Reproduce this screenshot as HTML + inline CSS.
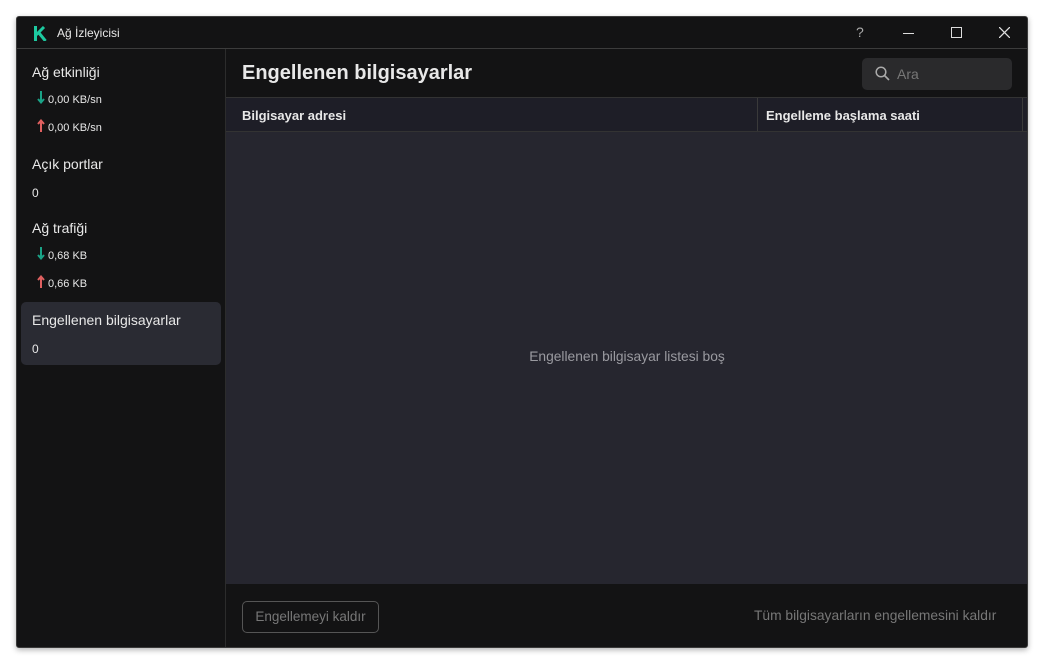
<!DOCTYPE html>
<html><head><style>
*{margin:0;padding:0;box-sizing:border-box}
body{width:1044px;height:664px;background:#fff;font-family:"Liberation Sans",sans-serif;position:relative;overflow:hidden}
.win{position:absolute;left:16px;top:16px;width:1012px;height:632px;background:#131314;border:1px solid #3a3a3a;border-radius:3px;overflow:hidden;box-shadow:0 2px 6px rgba(0,0,0,.3)}
.tb{position:absolute;left:0;top:0;width:100%;height:32px;border-bottom:1px solid #3c3c3c}
.t{position:absolute;color:#e8e8e8;white-space:nowrap}
.side{position:absolute;left:0;top:32px;width:209px;bottom:0;border-right:1px solid #2c2c2c}
.sel{position:absolute;left:4px;top:253px;width:200px;height:63px;background:#2a2b33;border-radius:5px}
.main{position:absolute;left:209px;top:32px;right:0;bottom:0}
.ar{position:absolute;left:20px}
</style></head><body>
<div class="win">
 <div class="tb">
  <svg style="position:absolute;left:17px;top:9px" width="13" height="15" viewBox="0 0 13 15"><path d="M1.5 0V15M2 9L10 1M5 7L11.5 15" stroke="#1dc9a0" stroke-width="3" fill="none"/></svg>
  <div class="t" style="left:40px;top:9px;font-size:12px">Ağ İzleyicisi</div>
  <div class="t" style="left:839px;top:7px;font-size:14px;color:#aaa">?</div>
  <div style="position:absolute;left:886px;top:16px;width:11px;height:1px;background:#ddd"></div>
  <div style="position:absolute;left:934px;top:10px;width:11px;height:11px;border:1.3px solid #ddd"></div>
  <svg style="position:absolute;left:982px;top:10px" width="11" height="11"><path d="M0 0L11 11M11 0L0 11" stroke="#ddd" stroke-width="1.3"/></svg>
 </div>
 <div class="side">
  <div class="sel"></div>
  <div class="t" style="left:15px;top:15px;font-size:14px">Ağ etkinliği</div>
  <svg class="ar" style="top:42px" width="8" height="13"><path d="M4 0V11M1 8L4 11.5L7 8" stroke="#1aa387" stroke-width="2" fill="none"/></svg>
  <div class="t" style="left:31px;top:45px;font-size:11px">0,00 KB/sn</div>
  <svg class="ar" style="top:70px" width="8" height="13"><path d="M4 13V2M1 5L4 1.5L7 5" stroke="#e06060" stroke-width="2" fill="none"/></svg>
  <div class="t" style="left:31px;top:73px;font-size:11px">0,00 KB/sn</div>
  <div class="t" style="left:15px;top:107px;font-size:14px">Açık portlar</div>
  <div class="t" style="left:15px;top:137px;font-size:12px">0</div>
  <div class="t" style="left:15px;top:171px;font-size:14px">Ağ trafiği</div>
  <svg class="ar" style="top:198px" width="8" height="13"><path d="M4 0V11M1 8L4 11.5L7 8" stroke="#1aa387" stroke-width="2" fill="none"/></svg>
  <div class="t" style="left:31px;top:201px;font-size:11px">0,68 KB</div>
  <svg class="ar" style="top:226px" width="8" height="13"><path d="M4 13V2M1 5L4 1.5L7 5" stroke="#e06060" stroke-width="2" fill="none"/></svg>
  <div class="t" style="left:31px;top:229px;font-size:11px">0,66 KB</div>
  <div class="t" style="left:15px;top:263px;font-size:14px">Engellenen bilgisayarlar</div>
  <div class="t" style="left:15px;top:293px;font-size:12px">0</div>
 </div>
 <div class="main">
  <div class="t" style="left:16px;top:13px;font-size:20px;font-weight:bold">Engellenen bilgisayarlar</div>
  <div style="position:absolute;left:636px;top:9px;width:150px;height:32px;background:#2a2a2c;border-radius:5px">
   <svg style="position:absolute;left:13px;top:8px" width="15" height="15"><circle cx="6" cy="6" r="4.8" stroke="#aaa" stroke-width="1.5" fill="none"/><path d="M9.5 9.5L14 14" stroke="#aaa" stroke-width="1.6"/></svg>
   <div class="t" style="left:35px;top:8px;font-size:14px;color:#777">Ara</div>
  </div>
  <div style="position:absolute;left:0;top:48px;right:0;height:35px;background:#1e1e27;border-top:1px solid #333;border-bottom:1px solid #333">
   <div class="t" style="left:16px;top:10px;font-size:13px;font-weight:bold">Bilgisayar adresi</div>
   <div style="position:absolute;left:531px;top:0;width:1px;height:33px;background:#3a3a3a"></div>
   <div class="t" style="left:540px;top:10px;font-size:13px;font-weight:bold">Engelleme başlama saati</div>
   <div style="position:absolute;left:796px;top:0;width:1px;height:33px;background:#3a3a3a"></div>
  </div>
  <div style="position:absolute;left:0;top:83px;right:0;height:452px;background:#26262f">
   <div class="t" style="left:0;width:802px;text-align:center;top:217px;font-size:13.8px;color:#9a9aa0">Engellenen bilgisayar listesi boş</div>
  </div>
  <div style="position:absolute;left:16px;top:552px;width:137px;height:32px;border:1px solid #555;border-radius:5px">
   <div class="t" style="left:0;width:135px;text-align:center;top:7px;font-size:13.5px;color:#777">Engellemeyi kaldır</div>
  </div>
  <div class="t" style="left:528px;top:559px;font-size:13.8px;color:#777">Tüm bilgisayarların engellemesini kaldır</div>
 </div>
</div>
</body></html>
